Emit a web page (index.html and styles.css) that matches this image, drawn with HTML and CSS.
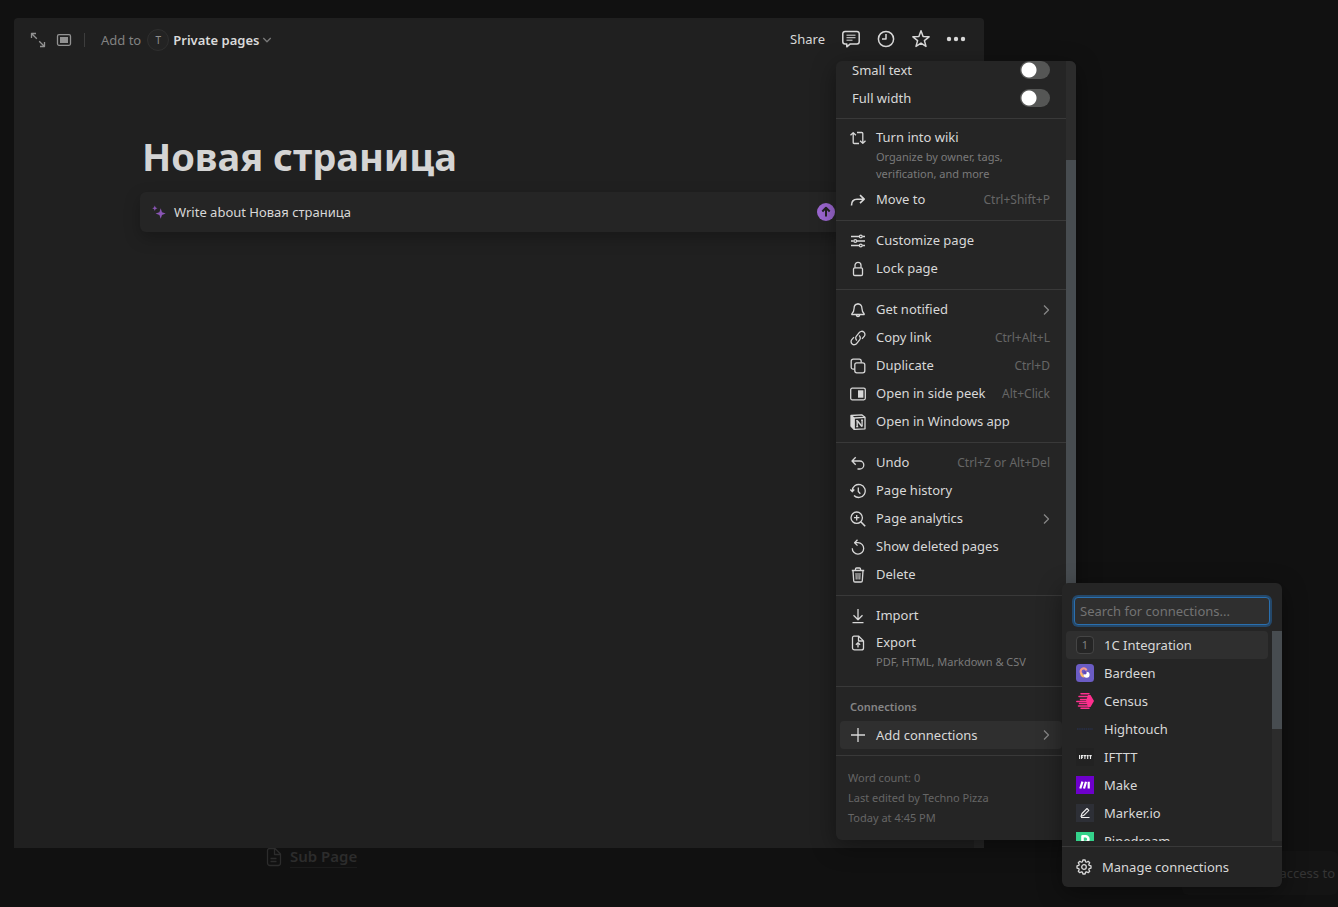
FILE: index.html
```html
<!DOCTYPE html>
<html lang="en">
<head>
<meta charset="utf-8">
<title>Новая страница</title>
<link rel="stylesheet" href="styles.css">
</head>
<body>
<svg class="sprite" aria-hidden="true">
  <symbol id="chevron" viewBox="0 0 8 12"><path d="M2 1.500 6.500 6l-4.500 4.500"/></symbol>
</svg>
<div class="stage">
  <div class="ghost-page"><svg viewBox="0 0 16 20"><path d="M3.500 1.500H9l5.500 5.500v9a2.500 2.500 0 0 1-2.500 2.500H4A2.500 2.500 0 0 1 1.500 16V3.500a2 2 0 0 1 2-2zM8.500 2v5.500H14M4.500 11.500h6M4.500 14.500h6"/></svg><span>Sub Page</span></div>
  <div class="ghost-toast">access to</div>

  <main class="modal">
    <header class="topbar">
      <button class="icon-btn dim" aria-label="Open as full page"><svg class="i16" viewBox="0 0 16 16"><path d="M1.500 6V1.500H6M2 2l4.800 4.800M14.500 10v4.500H10M14 14 9.200 9.200"/></svg></button>
      <button class="icon-btn dim" aria-label="Peek mode"><svg class="i16" viewBox="0 0 16 16"><rect x="1.500" y="2.700" width="13" height="10.600" rx="1.500"/><rect class="fill" x="4" y="5" width="8" height="6"/></svg></button>
      <span class="sep"></span>
      <button class="location"><span class="muted">Add to</span><span class="avatar">T</span><b>Private pages</b><svg class="caret" viewBox="0 0 10 6"><path d="M1.300 1 5 4.700 8.700 1"/></svg></button>
      <div class="actions">
        <button class="share">Share</button>
        <button class="icon-btn" aria-label="Comments"><svg class="i20" viewBox="0 0 20 20"><path d="M4 2.500h12A2.200 2.200 0 0 1 18.200 4.700v8a2.200 2.200 0 0 1-2.200 2.200H9.300L5.800 17.800v-2.900H4a2.200 2.200 0 0 1-2.200-2.200v-8A2.200 2.200 0 0 1 4 2.500z"/><path class="thin" d="M5.500 6.200h9M5.500 8.700h9M5.500 11.200h6"/></svg></button>
        <button class="icon-btn" aria-label="Updates"><svg class="i20" viewBox="0 0 20 20"><circle cx="10" cy="10" r="7.600"/><path d="M10 5v5H6"/></svg></button>
        <button class="icon-btn" aria-label="Favorite"><svg class="i20" viewBox="0 0 20 20"><path d="m10 1.800 2.100 5.700 6 .3-4.700 3.800 1.600 5.800-5-3.300-5 3.300 1.600-5.800L1.900 7.800l6-.3z"/></svg></button>
        <button class="icon-btn" aria-label="More"><svg class="i20 dots" viewBox="0 0 20 20"><circle cx="3" cy="10" r="2.200"/><circle cx="10" cy="10" r="2.200"/><circle cx="17" cy="10" r="2.200"/></svg></button>
      </div>
    </header>

    <article class="page">
      <h1>Новая страница</h1>
      <div class="ai-bar">
        <svg class="spark" viewBox="0 0 14 14"><path d="M8.700 3.300 10 7.200l3.700 1.300L10 9.900l-1.300 3.900-1.300-3.900-3.800-1.400 3.800-1.300zM2.800.6l.8 1.900 1.900.8-1.900.8-.8 1.900L2 4.100.2 3.300 2 2.500z"/></svg>
        <span>Write about Новая страница</span>
        <button class="send" aria-label="Submit"><svg viewBox="0 0 18 18"><path d="M9 13.500V5M5.300 8.500 9 4.800l3.700 3.700"/></svg></button>
      </div>
    </article>

    <span class="page-scroll"></span>

    <div class="menu-layer">
      <nav class="menu">
        <div class="menu-body">
          <section class="group toggles">
            <label class="row"><span>Small text</span><input type="checkbox" class="switch"></label>
            <label class="row"><span>Full width</span><input type="checkbox" class="switch"></label>
          </section>
          <section class="group">
            <button class="row wiki"><svg class="i16" viewBox="0 0 16 16"><path d="M.5 5.300 3.200 2.600l2.700 2.700M3.200 3v9.500a1 1 0 0 0 1 1H9M7 2.500h4.800a1 1 0 0 1 1 1V13M10.100 10.700l2.700 2.700 2.700-2.700"/></svg><span>Turn into wiki<small>Organize by owner, tags, verification, and more</small></span></button>
            <button class="row"><svg class="i16" viewBox="0 0 16 16"><path class="bold" d="M1.500 13.500c0-4 2-6.300 5.500-6.300h7M10 3.200l4.200 4-4.200 4"/></svg><span>Move to</span><kbd>Ctrl+Shift+P</kbd></button>
          </section>
          <section class="group">
            <button class="row"><svg class="i16" viewBox="0 0 16 16"><path d="M1 3.500h8M12.500 3.500H15M1 8h2.500M7 8h8M1 12.500h8M12.500 12.500H15"/><circle cx="10.800" cy="3.500" r="1.400"/><circle cx="5.300" cy="8" r="1.400"/><circle cx="10.800" cy="12.500" r="1.400"/></svg><span>Customize page</span></button>
            <button class="row"><svg class="i16" viewBox="0 0 16 16"><rect x="3.500" y="6.800" width="9" height="7.700" rx="1.300"/><path d="M5 6.800V4.300a3 3 0 0 1 6 0v2.500"/></svg><span>Lock page</span></button>
          </section>
          <section class="group">
            <button class="row"><svg class="i16" viewBox="0 0 16 16"><path d="M8 2c-2.600 0-3.900 1.900-3.900 4.200 0 3-1 4.300-2.300 5.700v.6h12.400v-.6c-1.300-1.400-2.300-2.700-2.300-5.700C11.900 3.900 10.600 2 8 2zM6.300 13c.2 1 .8 1.500 1.700 1.500S9.500 14 9.700 13M8 1v1"/></svg><span>Get notified</span><svg class="arrow"><use href="#chevron"/></svg></button>
            <button class="row"><svg class="i16" viewBox="0 0 16 16"><path d="M7 10.500a3 3 0 0 1-.6-4.400l3-3.700a3.100 3.100 0 0 1 4.400-.4 3.100 3.100 0 0 1 .4 4.400L12 8.900M9 5.500a3 3 0 0 1 .6 4.400l-3 3.700a3.100 3.100 0 0 1-4.400.4 3.100 3.100 0 0 1-.4-4.400L4 7.100"/></svg><span>Copy link</span><kbd>Ctrl+Alt+L</kbd></button>
            <button class="row"><svg class="i16" viewBox="0 0 16 16"><rect x="4.800" y="4.800" width="10" height="10" rx="2"/><path d="M4.800 11.200H3.200a2 2 0 0 1-2-2v-6a2 2 0 0 1 2-2h6a2 2 0 0 1 2 2v1.600"/></svg><span>Duplicate</span><kbd>Ctrl+D</kbd></button>
            <button class="row"><svg class="i16" viewBox="0 0 16 16"><rect x=".7" y="2.200" width="14.600" height="11.600" rx="1.500"/><rect class="fill" x="8" y="4.300" width="5.400" height="7.400"/></svg><span>Open in side peek</span><kbd>Alt+Click</kbd></button>
            <button class="row"><svg class="i16" viewBox="0 0 16 16"><path d="M1 1.500 11.700.8 15 3.300v11.500L4 15.400 1 12z"/><path d="M1 1.500 4.200 4 15 3.400M4.200 4v11"/><path class="fill" d="M1 1.500 4.200 4v11L1 12z"/><path d="M7.200 12.500V6.500M12.100 12.500V6.200M6.200 6.600h1.500M6.200 12.600h2M11 6.200h2"/><path class="bold" d="m7.300 6.800 4.700 5.600"/></svg><span>Open in Windows app</span></button>
          </section>
          <section class="group">
            <button class="row"><svg class="i16" viewBox="0 0 16 16"><path d="M5.700 2.200 2 6l3.700 3.800M2.300 6h7.500a4 4 0 0 1 0 8H7.500"/></svg><span>Undo</span><kbd>Ctrl+Z or Alt+Del</kbd></button>
            <button class="row"><svg class="i16" viewBox="0 0 16 16"><path d="M2.200 8A6.500 6.500 0 1 1 4 12.500M.3 6.500 2.200 8.700l2.100-2.200M8.300 4.500v4l2 2.300"/></svg><span>Page history</span></button>
            <button class="row"><svg class="i16" viewBox="0 0 16 16"><circle cx="6.700" cy="6.700" r="5.700"/><path class="bold" d="m10.800 10.800 4.400 4.400"/><path d="M6.700 4v5.400M4 6.700h5.400"/></svg><span>Page analytics</span><svg class="arrow"><use href="#chevron"/></svg></button>
            <button class="row"><svg class="i16" viewBox="0 0 16 16"><path d="M2.300 9.200a5.700 5.700 0 1 0 5.700-5.500H5M7.500.8 4.600 3.700l2.900 2.900"/></svg><span>Show deleted pages</span></button>
            <button class="row"><svg class="i16" viewBox="0 0 16 16"><path d="M1.800 3.500h12.400M5.500 3.300V2a1 1 0 0 1 1-1h3a1 1 0 0 1 1 1v1.300M3 3.700l.7 10a1.300 1.300 0 0 0 1.300 1.300h6a1.300 1.300 0 0 0 1.300-1.300l.7-10"/><path class="thin" d="m6 6 .2 6.500M8 6v6.500M10 6l-.2 6.500"/></svg><span>Delete</span></button>
          </section>
          <section class="group">
            <button class="row"><svg class="i16" viewBox="0 0 16 16"><path d="M8 1v10.500M3.500 7.300 8 11.700l4.500-4.400M2.500 14.700h11"/></svg><span>Import</span></button>
            <button class="row export"><svg class="i16" viewBox="0 0 16 16"><path d="M4 1.200h4.800l4.700 4.700v7a2 2 0 0 1-2 2h-7a2 2 0 0 1-2-2V2.700A1.500 1.500 0 0 1 4 1.200zM8.500 1.500V6h4.700M8 12.500V7.700M5.900 9.700 8 7.600l2.100 2.100"/></svg><span>Export<small>PDF, HTML, Markdown &amp; CSV</small></span></button>
          </section>
          <section class="group">
            <h2>Connections</h2>
            <button class="row active"><svg class="i16" viewBox="0 0 16 16"><path d="M8 1v14M1 8h14"/></svg><span>Add connections</span><svg class="arrow"><use href="#chevron"/></svg></button>
          </section>
          <footer class="meta"><p>Word count: 0</p><p>Last edited by Techno Pizza</p><p>Today at 4:45 PM</p></footer>
        </div>
        <div class="track"><div class="thumb"></div></div>
      </nav>

      <section class="connections">
        <div class="search"><input type="text" placeholder="Search for connections..." aria-label="Search for connections"></div>
        <div class="list">
          <div class="items">
            <button class="item active"><span class="letter">1</span>1C Integration</button>
            <button class="item"><svg viewBox="0 0 18 18"><rect width="18" height="18" rx="3.500" fill="#6b5cc4"/><path d="M5.500 9.500a3 3 0 1 1 5-3" fill="none" stroke="#f79a8b" stroke-width="2.200"/><path d="M5.300 9a3.500 3.500 0 0 0 3.200 3.500" fill="none" stroke="#fbb968" stroke-width="2.200"/><circle cx="10.600" cy="10.700" r="3" fill="#fff"/><circle cx="9" cy="8.800" r="1.700" fill="#6048b8"/></svg>Bardeen</button>
            <button class="item"><svg viewBox="0 0 18 18"><path d="M12 3h2.500L18 9l-3.500 6H12L10 9z" fill="#ff2f8e"/><path d="M5 1.700h8M3 4.600h11M4.500 7.500h10M.8 9.500h12M3.500 11.500h10M2.500 14h11M5 16.300h8" stroke="#ff2f8e" stroke-width="1.500" stroke-linecap="round"/></svg>Census</button>
            <button class="item"><svg viewBox="0 0 18 18"><path d="M1 9h16" stroke="#28304a" stroke-width="1.500" stroke-dasharray="1.500 .7"/></svg>Hightouch</button>
            <button class="item"><svg viewBox="0 0 18 18"><rect width="18" height="18" fill="#222"/><path d="M3.600 7v4M5.600 11V7M5 7.600h2.200M5 9.200h2M7.600 7.600h2.600M8.900 7v4M10.700 7.600h2M11.700 7v4M13.300 7.600h2.400M14.500 7v4" stroke="#eee" stroke-width="1.100"/></svg>IFTTT</button>
            <button class="item"><svg viewBox="0 0 18 18"><rect width="18" height="18" fill="#6d00cc"/><path d="M4.300 12.500 6.500 5.700M8 12.500l2-6.800M12.700 12.500V5.700" stroke="#fff" stroke-width="2.200"/></svg>Make</button>
            <button class="item"><svg viewBox="0 0 18 18"><rect width="18" height="18" fill="#2d2f36"/><path d="m5 12.500 1-3 5-5 1.800 1.800-5 5zM5 13.500h8.500" fill="none" stroke="#eee" stroke-width="1.100"/></svg>Marker.io</button>
            <button class="item"><svg viewBox="0 0 18 18"><rect width="18" height="18" fill="#34d28b"/><path d="M6.500 15V4.300h3a2.800 2.800 0 0 1 0 5.800h-3" fill="none" stroke="#fff" stroke-width="2.600"/></svg>Pipedream</button>
          </div>
          <div class="track"><div class="thumb"></div></div>
        </div>
        <button class="manage"><svg class="i16" viewBox="0 0 16 16"><path d="M6.900 1h2.200l.5 1.800 1 .4 1.600-.9 1.500 1.500-.9 1.600.4 1 1.800.5v2.200l-1.800.5-.4 1 .9 1.600-1.500 1.500-1.600-.9-1 .4L9.100 15H6.900l-.5-1.800-1-.4-1.600.9-1.500-1.500.9-1.600-.4-1L1 9.100V6.900l1.800-.5.4-1-.9-1.600 1.500-1.500 1.600.9 1-.4z"/><circle cx="8" cy="8" r="2.300"/></svg>Manage connections</button>
      </section>
    </div>
  </main>
</div>
</body>
</html>
```
FILE: styles.css
```css
* { box-sizing: border-box; }
body {
  margin: 0;
  background: #111;
  color: #d8d8d8;
  font: 13px/20px "Noto Sans", "Open Sans", sans-serif;
}
button, input { font: inherit; color: inherit; }
button { border: 0; padding: 0; background: none; text-align: left; cursor: pointer; }
svg { flex: none; fill: none; stroke: currentColor; stroke-width: 1.3; stroke-linejoin: round; }
.sprite { display: none; }
.i16 { width: 16px; height: 16px; }
.i20 { width: 20px; height: 20px; stroke-width: 1.5; }
.fill { fill: currentColor; stroke: none; }
.thin { stroke-width: 1; }
.bold { stroke-width: 1.6; }

.stage {
  position: relative;
  display: grid;
  min-height: 100vh;
  padding: 18px 354px 59px 14px;
}

.ghost-page {
  position: absolute;
  left: 266px;
  bottom: 39px;
  display: flex;
  align-items: center;
  gap: 8px;
  color: #2c2c2c;
  font-size: 15px;
  line-height: 22px;
  font-weight: 600;
}
.ghost-page svg { width: 16px; height: 20px; }
.ghost-page span { border-bottom: 1px solid #1b1b1b; }
.ghost-toast {
  position: absolute;
  right: 0;
  bottom: 12px;
  width: 156px;
  padding: 12px 3px 12px 0;
  border-radius: 6px;
  background: #141414;
  color: #353535;
  text-align: right;
}

.modal {
  position: relative;
  display: flex;
  flex-direction: column;
  border-radius: 4px 4px 0 0;
  background: #202020;
}
.page-scroll {
  position: absolute;
  right: 0;
  bottom: 0;
  width: 10px;
  height: 8px;
  background: #262626;
}

.topbar {
  display: flex;
  align-items: center;
  height: 44px;
  padding: 0 18px 0 16px;
}
.icon-btn { display: flex; }
.dim { margin-right: 10px; color: #929292; }
.sep { width: 1px; height: 14px; margin: 0 16px 0 2px; background: #3d3d3d; }
.location { display: flex; align-items: center; }
.location b { font-weight: 600; color: #dadada; }
.muted { color: #828282; }
.avatar {
  width: 22px;
  height: 22px;
  margin: 0 4px 0 6px;
  border: 1px solid #2f2f2f;
  border-radius: 50%;
  background: #232323;
  color: #8f8f8f;
  font-size: 10px;
  text-align: center;
}
.caret { width: 10px; height: 6px; margin-left: 3px; color: #7a7a7a; }
.actions { display: flex; align-items: center; gap: 15px; margin-left: auto; padding-bottom: 2px; }
.share { margin-right: 1px; }
.dots { fill: currentColor; stroke: none; }

.page { padding: 66px 0 0 126px; }
h1 {
  margin: 0;
  padding-left: 2px;
  color: #d4d4d4;
  font-size: 38px;
  line-height: 56px;
  font-weight: 700;
}
.ai-bar {
  display: flex;
  align-items: center;
  height: 40px;
  margin: 8px 140px 0 0;
  padding: 0 9px 0 12px;
  border-radius: 6px;
  background: #252525;
  box-shadow: 0 6px 16px rgba(0, 0, 0, .25);
}
.spark { width: 14px; height: 14px; margin-right: 8px; fill: #8a55b5; stroke: none; }
.send { margin-left: auto; color: #222; }
.send svg { display: block; width: 18px; height: 18px; border-radius: 50%; background: #9d68d3; stroke-width: 2; }

.menu-layer {
  position: absolute;
  top: 43px;
  right: -92px;
  width: 240px;
}
.menu {
  display: flex;
  overflow: hidden;
  border-radius: 6px;
  background: #252525;
  box-shadow: 0 6px 24px rgba(0, 0, 0, .4);
}
.menu-body { flex: 1; min-width: 0; }
.track { width: 10px; background: #2c2c2c; }
.thumb { background: #474c50; }
.menu .thumb { height: 620px; margin-top: 99px; }

.group { padding: 6px 0; border-bottom: 1px solid #393939; }
.toggles { padding-top: 0; margin-top: -5px; }
.row {
  display: flex;
  align-items: center;
  gap: 10px;
  width: 100%;
  min-height: 28px;
  padding: 0 16px 0 14px;
  white-space: nowrap;
}
.row span { padding-bottom: 2px; }
.toggles .row { justify-content: space-between; padding-left: 16px; }
.toggles span, .active span { padding-bottom: 0; }
.row kbd { margin-left: auto; color: #666; font: inherit; font-size: 12px; }
.row small { display: block; padding-top: 1px; color: #7a7a7a; font-size: 11px; line-height: 17px; white-space: normal; }
.wiki, .export { align-items: flex-start; }
.wiki { height: 61px; padding-top: 2px; }
.export { height: 50px; padding-top: 2px; }
.wiki .i16, .export .i16 { margin-top: 3px; }
.wiki span, .export span { flex: 1; min-width: 0; }
.arrow { width: 8px; height: 12px; margin-left: auto; color: #858585; }
.group .active {
  width: auto;
  min-width: calc(100% - 8px);
  margin: 0 4px;
  padding: 0 12px 0 10px;
  border-radius: 4px;
  background: #2f2f2f;
}
h2 { margin: 0; padding-left: 14px; color: #868686; font-size: 11px; line-height: 28px; font-weight: 600; }
.meta { padding: 12px; color: #666; font-size: 11px; }
.meta p { margin: 0; }

.switch {
  appearance: none;
  width: 30px;
  height: 18px;
  margin: 0;
  border-radius: 9px;
  background: radial-gradient(circle at 9px 9px, #fff 7px, transparent 8px) #555655;
}

.connections {
  position: absolute;
  left: 226px;
  bottom: -47px;
  width: 220px;
  border-radius: 6px;
  background: #252525;
  box-shadow: 0 6px 24px rgba(0, 0, 0, .4);
}
.search { padding: 14px 12px 6px; }
.search input {
  display: block;
  width: 100%;
  height: 28px;
  padding: 0 5px;
  border: 1px solid #2a6fae;
  border-radius: 4px;
  outline: 0;
  background: #2f2f2f;
  box-shadow: 0 0 0 2px #24486a;
}
.search input::placeholder { color: #737373; opacity: 1; }
.list { display: flex; height: 210px; margin-bottom: 5px; overflow: hidden; }
.items { flex: 1; padding: 0 4px; }
.item {
  display: flex;
  align-items: center;
  gap: 10px;
  width: 100%;
  height: 28px;
  padding: 0 10px;
  border-radius: 4px;
}
.item.active { background: #2f2f2f; }
.item svg { width: 18px; height: 18px; stroke: none; }
.letter {
  width: 18px;
  height: 18px;
  border: 1px solid #454545;
  border-radius: 4px;
  background: #252525;
  color: #808080;
  font-size: 11px;
  line-height: 16px;
  text-align: center;
}
.list .thumb { height: 98px; }
.manage {
  display: flex;
  align-items: center;
  gap: 10px;
  width: 100%;
  height: 41px;
  padding: 0 14px;
  border-top: 1px solid #393939;
}
```
